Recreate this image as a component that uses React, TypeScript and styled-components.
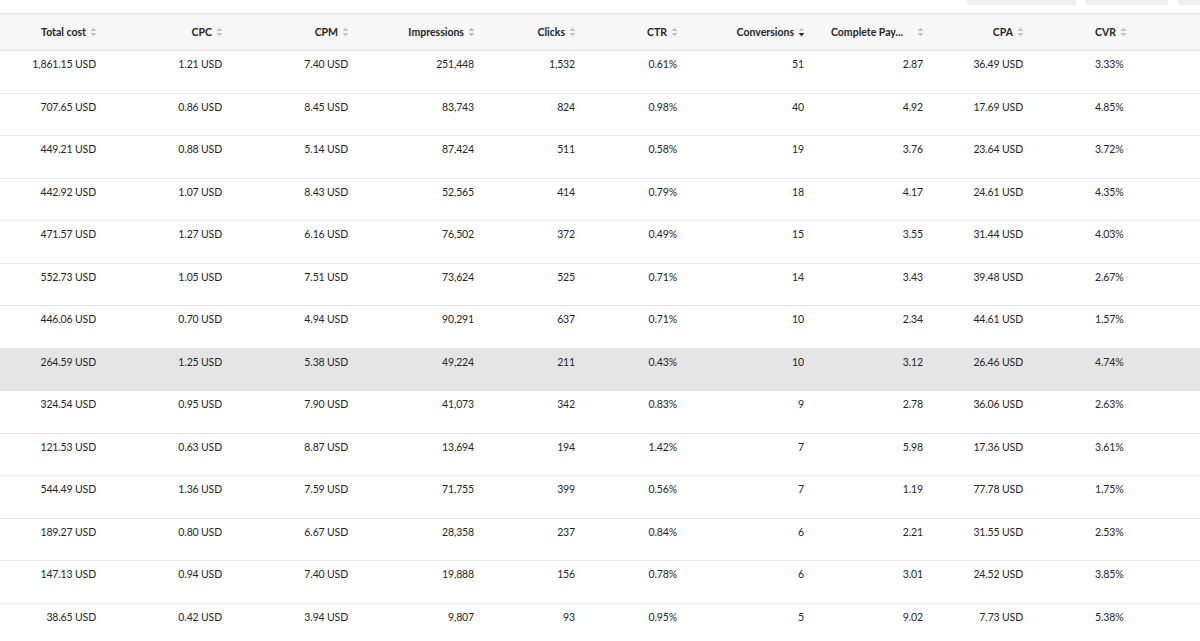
import React from 'react';
import styled, { createGlobalStyle } from 'styled-components';

const GlobalStyle = createGlobalStyle`
  html, body {
    margin: 0;
    padding: 0;
    background: #ffffff;
  }
  body {
    font-family: Lato, "Open Sans", Arial, sans-serif;
    color: #2b2b2b;
    overflow: hidden;
  }
`;

type Align = 'left' | 'right';
type Col = { key: string; title: string; width: number; align: Align; pad: number; sort?: 'none' | 'desc'; truncate?: boolean };

const columns: Col[] = [
  { key: 'cost', title: 'Total cost', width: 96, align: 'right', pad: 0 },
  { key: 'cpc', title: 'CPC', width: 126, align: 'right', pad: 0 },
  { key: 'cpm', title: 'CPM', width: 126, align: 'right', pad: 0 },
  { key: 'imp', title: 'Impressions', width: 126, align: 'right', pad: 0 },
  { key: 'clicks', title: 'Clicks', width: 101, align: 'right', pad: 0 },
  { key: 'ctr', title: 'CTR', width: 102, align: 'right', pad: 0 },
  { key: 'conv', title: 'Conversions', width: 127, align: 'right', pad: 0, sort: 'desc' },
  { key: 'pay', title: 'Complete Pay...', width: 119, align: 'right', pad: 0, truncate: true },
  { key: 'cpa', title: 'CPA', width: 100, align: 'right', pad: 0 },
  { key: 'cvr', title: 'CVR', width: 176, align: 'left', pad: 72 },
];

const rows: string[][] = [
  ['1,861.15 USD', '1.21 USD', '7.40 USD', '251,448', '1,532', '0.61%', '51', '2.87', '36.49 USD', '3.33%'],
  ['707.65 USD', '0.86 USD', '8.45 USD', '83,743', '824', '0.98%', '40', '4.92', '17.69 USD', '4.85%'],
  ['449.21 USD', '0.88 USD', '5.14 USD', '87,424', '511', '0.58%', '19', '3.76', '23.64 USD', '3.72%'],
  ['442.92 USD', '1.07 USD', '8.43 USD', '52,565', '414', '0.79%', '18', '4.17', '24.61 USD', '4.35%'],
  ['471.57 USD', '1.27 USD', '6.16 USD', '76,502', '372', '0.49%', '15', '3.55', '31.44 USD', '4.03%'],
  ['552.73 USD', '1.05 USD', '7.51 USD', '73,624', '525', '0.71%', '14', '3.43', '39.48 USD', '2.67%'],
  ['446.06 USD', '0.70 USD', '4.94 USD', '90,291', '637', '0.71%', '10', '2.34', '44.61 USD', '1.57%'],
  ['264.59 USD', '1.25 USD', '5.38 USD', '49,224', '211', '0.43%', '10', '3.12', '26.46 USD', '4.74%'],
  ['324.54 USD', '0.95 USD', '7.90 USD', '41,073', '342', '0.83%', '9', '2.78', '36.06 USD', '2.63%'],
  ['121.53 USD', '0.63 USD', '8.87 USD', '13,694', '194', '1.42%', '7', '5.98', '17.36 USD', '3.61%'],
  ['544.49 USD', '1.36 USD', '7.59 USD', '71,755', '399', '0.56%', '7', '1.19', '77.78 USD', '1.75%'],
  ['189.27 USD', '0.80 USD', '6.67 USD', '28,358', '237', '0.84%', '6', '2.21', '31.55 USD', '2.53%'],
  ['147.13 USD', '0.94 USD', '7.40 USD', '19,888', '156', '0.78%', '6', '3.01', '24.52 USD', '3.85%'],
  ['38.65 USD', '0.42 USD', '3.94 USD', '9,807', '93', '0.95%', '5', '9.02', '7.73 USD', '5.38%'],
];

const Page = styled.div`
  width: 1200px;
  height: 641px;
  overflow: hidden;
`;

const Toolbar = styled.div`
  height: 13px;
  display: flex;
  justify-content: flex-end;
  align-items: flex-start;
  gap: 10px;
`;

const ToolButton = styled.div<{ $w: number }>`
  width: ${p => p.$w}px;
  height: 5px;
  background: #efefef;
  border-radius: 0 0 2px 2px;
`;

const Grid = styled.div`
  display: grid;
  grid-template-columns: ${columns.map(c => `${c.width}px`).join(' ')} 1fr;
`;

const HeaderRow = styled.div`
  display: contents;
`;

const HeadCell = styled.div<{ $align: Align; $pad: number }>`
  height: 38px;
  box-sizing: border-box;
  background: #f7f7f7;
  border-top: 1px solid #e3e3e3;
  border-bottom: 1px solid #e6e6e6;
  display: flex;
  align-items: center;
  justify-content: ${p => (p.$align === 'right' ? 'flex-end' : 'flex-start')};
  padding-left: ${p => p.$pad}px;
  font-size: 10.5px;
  font-weight: 700;
  color: #262626;
  white-space: nowrap;
`;

const HeadLabel = styled.span<{ $truncate?: boolean }>`
  ${p => (p.$truncate ? 'flex: 1; padding-left: 27px; overflow: hidden; text-overflow: clip;' : '')}
`;

const SortIcon = styled.svg`
  width: 7px;
  height: 10px;
  margin-left: 4px;
  margin-right: -1px;
  flex: none;
`;

const Row = styled.div<{ $active?: boolean }>`
  display: contents;
  & > div {
    background: ${p => (p.$active ? '#e5e5e5' : '#ffffff')};
  }
`;

const Cell = styled.div<{ $align: Align; $pad: number }>`
  height: 42.5px;
  box-sizing: border-box;
  border-bottom: 1px solid #e6e6e6;
  padding-top: 7px;
  padding-left: ${p => p.$pad}px;
  text-align: ${p => p.$align};
  font-size: 10.5px;
  line-height: 13px;
  letter-spacing: -0.15px;
  color: #262626;
  white-space: nowrap;
`;

const Sorter = ({ mode }: { mode?: 'none' | 'desc' }) => (
  <SortIcon viewBox="0 0 7 10">
    <path d="M3.5 0.5 L6.5 4 L0.5 4 Z" fill={mode === 'desc' ? '#c9c9c9' : '#c4c4c4'} />
    <path d="M0.5 6 L6.5 6 L3.5 9.5 Z" fill={mode === 'desc' ? '#333333' : '#c4c4c4'} />
  </SortIcon>
);

const App = () => {
  return (
    <Page>
      <GlobalStyle />
      <Toolbar>
        <ToolButton $w={109} />
        <ToolButton $w={82} />
        <ToolButton $w={22} />
      </Toolbar>
      <Grid>
        <HeaderRow>
          {columns.map(c => (
            <HeadCell key={c.key} $align={c.align} $pad={c.pad}>
              <HeadLabel $truncate={c.truncate}>{c.title}</HeadLabel>
              <Sorter mode={c.sort} />
            </HeadCell>
          ))}
          <HeadCell $align="left" $pad={0} />
        </HeaderRow>
        {rows.map((r, i) => (
          <Row key={i} $active={i === 7}>
            {r.map((v, j) => (
              <Cell key={j} $align={columns[j].align} $pad={columns[j].pad}>
                {v}
              </Cell>
            ))}
            <Cell $align="left" $pad={0} />
          </Row>
        ))}
      </Grid>
    </Page>
  );
};

export default App;
